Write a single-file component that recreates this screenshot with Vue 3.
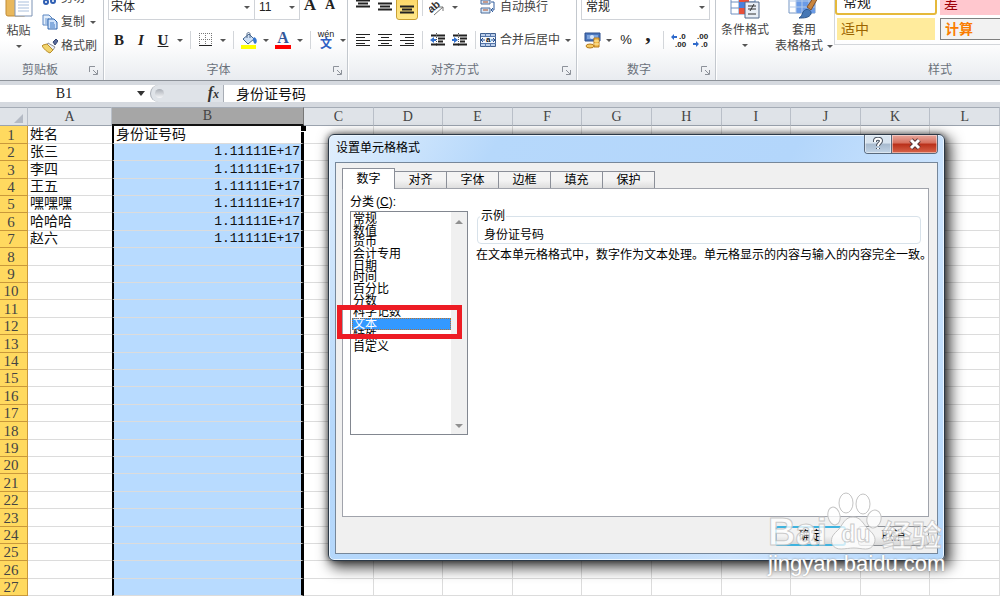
<script setup>
import { ref } from 'vue'

const columns = ['A', 'B', 'C', 'D', 'E', 'F', 'G', 'H', 'I', 'J', 'K', 'L']
const names = ['姓名', '张三', '李四', '王五', '嘿嘿嘿', '哈哈哈', '赵六']
const rows = Array.from({ length: 27 }, (_, i) => ({
  n: i + 1,
  a: names[i] || '',
  b: i === 0 ? '身份证号码' : i < 7 ? '1.11111E+17' : ''
}))
const tabs = ['数字', '对齐', '字体', '边框', '填充', '保护']
const categories = ['常规', '数值', '货币', '会计专用', '日期', '时间', '百分比', '分数', '科学记数', '文本', '特殊', '自定义']
const activeTab = ref('数字')
const category = ref('文本')
const formula = ref('身份证号码')
const cellName = ref('B1')
const vAligns = [
  { name: '顶端对齐', d: 'M1 2.5h14M3 5.5h10M1 8.5h14' },
  { name: '垂直居中', d: 'M1 5.5h14M3 8.5h10M1 11.5h14' },
  { name: '底端对齐', d: 'M1 8.5h14M3 11.5h10M1 14.5h14', on: true }
]
const hAligns = [
  { name: '文本左对齐', d: 'M1 2.5h14M1 5.5h9M1 8.5h14M1 11.5h9M1 13.5h14' },
  { name: '居中', d: 'M1 2.5h14M4 5.5h8M1 8.5h14M4 11.5h8M1 13.5h14' },
  { name: '文本右对齐', d: 'M1 2.5h14M6 5.5h9M1 8.5h14M6 11.5h9M1 13.5h14' }
]
</script>

<template>
  <main class="app">
    <header class="ribbon">
      <section class="group clip">
        <div class="tools side">
          <button class="big paste">
            <svg width="34" height="36" viewBox="0 0 34 36">
              <rect x="4" y="3" width="20" height="29" rx="2" fill="#e9b85c" stroke="#c18b35" />
              <path d="M13 8h11l6 6v18H13z" fill="#fff" stroke="#7c93b5" />
              <path d="M16 15h8M16 18h11M16 21h11M16 24h11M16 27h11" stroke="#a9bfdc" />
            </svg>
            <span>粘贴</span><i class="caret"></i>
          </button>
          <div class="stack">
            <button class="line">
              <svg width="16" height="16" viewBox="0 0 16 16"><path d="M6 0l5 10M11 0L5 10" stroke="#6f87a8" /><circle cx="4" cy="12" r="2" fill="none" stroke="#2f5fb3" stroke-width="2" /><circle cx="11" cy="11" r="2" fill="none" stroke="#2f5fb3" stroke-width="2" /></svg>
              <span>剪切</span>
            </button>
            <button class="line">
              <svg width="16" height="16" viewBox="0 0 16 16"><path d="M1 1h6l3 3v7H1z" fill="#e4effc" stroke="#5a86c2" /><path d="M3 5h4M3 7h4M3 9h3" stroke="#6c98d2" /><path d="M6 5h6l3 3v7H6z" fill="#cfe2fa" stroke="#2f65ad" /><path d="M8 9h4M8 11h5M8 13h5" stroke="#3f78c4" /></svg>
              <span>复制</span><i class="caret"></i>
            </button>
            <button class="line">
              <svg width="16" height="16" viewBox="0 0 16 16"><path d="M11 4l3-3 2 2-3 4z" fill="#586a9b" stroke="#344674" /><path d="M6 5l7 4-2 3-6-5z" fill="#edf0f5" stroke="#8e8f9a" /><path d="M1 7l4-1 6 6-3 3C5 14 2 11 0 8z" fill="#f1d36b" stroke="#b98e2d" /></svg>
              <span>格式刷</span>
            </button>
          </div>
        </div>
        <footer><span>剪贴板</span><button class="launch" aria-label="剪贴板选项"><svg width="9" height="9" viewBox="0 0 9 9"><path d="M.5 6V.5H6M8.500 4v4.500H4M4 4l4 4" fill="none" stroke="#8d929a" /></svg></button></footer>
      </section>

      <section class="group font">
        <div class="tools">
          <div class="row">
            <label class="combo wide"><select aria-label="字体"><option>宋体</option></select><i class="caret"></i></label>
            <label class="combo small"><select aria-label="字号"><option>11</option></select><i class="caret"></i></label>
            <button class="btn serif grow" aria-label="增大字号">A<svg width="6" height="5" viewBox="0 0 6 5"><path d="M0 4l3-4 3 4z" fill="#3567b8" /></svg></button>
            <button class="btn serif shrink" aria-label="减小字号">A<svg width="6" height="5" viewBox="0 0 6 5"><path d="M0 0l3 4 3-4z" fill="#3567b8" /></svg></button>
          </div>
          <div class="row">
            <button class="btn serif"><b>B</b></button>
            <button class="btn serif"><em>I</em></button>
            <button class="btn serif"><u>U</u></button>
            <button class="drop" aria-label="下划线选项"><i class="caret"></i></button>
            <i class="sep"></i>
            <button class="btn" aria-label="边框"><svg width="14" height="14" viewBox="0 0 14 14"><path d="M.5 0v13M6.500 0v13M12.500 0v13M0 .5h13M0 6.500h13" stroke="#777" stroke-dasharray="1 1" /><path d="M0 12.500h13" stroke="#222" /></svg></button>
            <button class="drop" aria-label="边框选项"><i class="caret"></i></button>
            <i class="sep"></i>
            <button class="btn" aria-label="填充颜色"><svg width="18" height="17" viewBox="0 0 18 17"><path d="M3 7l6-5 5 5-6 5z" fill="#cfe0f5" stroke="#3f638f" /><path d="M7 6V2c0-2 3-2 3 0v4" fill="none" stroke="#526b8a" /><path d="M14 5c4 2 3 6 1 7-1-1-2-2-2-5z" fill="#3575cf" /><path d="M1 13h15v4H1z" fill="#ff0" /></svg></button>
            <button class="drop" aria-label="填充选项"><i class="caret"></i></button>
            <button class="btn tone" aria-label="字体颜色"><span>A</span></button>
            <button class="drop" aria-label="字体颜色选项"><i class="caret"></i></button>
            <i class="sep"></i>
            <button class="btn pinyin" aria-label="拼音"><span>wén</span><b>文</b></button>
            <button class="drop" aria-label="拼音选项"><i class="caret"></i></button>
          </div>
        </div>
        <footer><span>字体</span><button class="launch" aria-label="字体选项"><svg width="9" height="9" viewBox="0 0 9 9"><path d="M.5 6V.5H6M8.500 4v4.500H4M4 4l4 4" fill="none" stroke="#8d929a" /></svg></button></footer>
      </section>

      <section class="group align">
        <div class="tools">
          <div class="row">
            <button v-for="a in vAligns" :key="a.name" class="btn" :class="{ on: a.on }" :aria-label="a.name"><svg width="16" height="18" viewBox="0 0 16 18"><path :d="a.d" stroke="#222" stroke-width="2" /></svg></button>
            <i class="sep"></i>
            <button class="btn" aria-label="方向"><svg width="18" height="17" viewBox="0 0 18 17"><text x="0" y="11" font-size="11" font-weight="bold" font-family="Liberation Sans" fill="#333" transform="rotate(-40 6 10)">ab</text><path d="M5 16l9-8M10 8h4v4" fill="none" stroke="#777" /></svg></button>
            <button class="drop" aria-label="方向选项"><i class="caret"></i></button>
            <i class="sep push"></i>
            <button class="line wrap">
              <svg width="16" height="16" viewBox="0 0 16 16"><path d="M1 1h9v4H1zM1 9h9v5H1z" fill="#d8e7f8" stroke="#4c6d99" /><path d="M3 3h5M3 11h5" stroke="#b04e22" /><path d="M11 3h3v8h-2M13 9l-2 2 2 2" fill="none" stroke="#315d9d" /></svg>
              <span>自动换行</span>
            </button>
          </div>
          <div class="row">
            <button v-for="a in hAligns" :key="a.name" class="btn" :aria-label="a.name"><svg width="16" height="16" viewBox="0 0 16 16"><path :d="a.d" stroke="#222" /></svg></button>
            <i class="sep"></i>
            <button class="btn" aria-label="减少缩进"><svg width="16" height="16" viewBox="0 0 16 16"><path d="M1 3.500h14M8 6.500h7M8 9.500h5M1 12.500h14" stroke="#222" stroke-width="2" /><path d="M6.500 1v14" stroke="#555" stroke-dasharray="1 1" /><path d="M0 8l4-3v2h2v2H4v2z" fill="#3271cf" /></svg></button>
            <button class="btn" aria-label="增加缩进"><svg width="16" height="16" viewBox="0 0 16 16"><path d="M1 3.500h14M8 6.500h7M8 9.500h5M1 12.500h14" stroke="#222" stroke-width="2" /><path d="M6.500 1v14" stroke="#555" stroke-dasharray="1 1" /><path d="M6 8L2 5v2H0v2h2v2z" fill="#3271cf" /></svg></button>
            <i class="sep"></i>
            <button class="line wrap">
              <svg width="16" height="16" viewBox="0 0 16 16"><path d="M.5 1.500h15v13H.5z" fill="#b9cdea" stroke="#3f5f8e" /><path d="M1 5h14v6H1z" fill="#f2f7fd" /><path d="M1 4.500h15M1 11.500h15M5.500 1v3M10.500 1v3M5.500 12v3M10.500 12v3" stroke="#5576aa" /><path d="M1 8h4M3 6l-2 2 2 2M15 8h-4M13 6l2 2-2 2" fill="none" stroke="#274f91" /><text x="6" y="10" font-size="8" font-weight="bold" font-family="Liberation Sans" fill="#111">a</text></svg>
              <span>合并后居中</span><i class="caret"></i>
            </button>
          </div>
        </div>
        <footer><span>对齐方式</span><button class="launch" aria-label="对齐选项"><svg width="9" height="9" viewBox="0 0 9 9"><path d="M.5 6V.5H6M8.500 4v4.500H4M4 4l4 4" fill="none" stroke="#8d929a" /></svg></button></footer>
      </section>

      <section class="group number">
        <div class="tools">
          <div class="row">
            <label class="combo full"><select aria-label="数字格式"><option>常规</option></select><i class="caret"></i></label>
          </div>
          <div class="row">
            <button class="btn" aria-label="会计数字格式"><svg width="17" height="17" viewBox="0 0 17 17"><path d="M1 1h15v8H1z" fill="#4d78bd" stroke="#2c4f8d" /><path d="M3 3h11v4H3z" fill="#7fa5dd" /><circle cx="8" cy="5" r="2" fill="#d8e8fc" /><path d="M10 6h5v9h-5z" fill="#f2bd4e" stroke="#b77a1c" /><path d="M10 9h5M10 12h5" stroke="#fff0b0" /><ellipse cx="6" cy="14" rx="4" ry="2" fill="#f5ca62" stroke="#b77a1c" /></svg></button>
            <button class="drop" aria-label="会计选项"><i class="caret"></i></button>
            <button class="btn pct">%</button>
            <button class="btn comma">,</button>
            <i class="sep"></i>
            <button class="btn" aria-label="增加小数位数"><svg width="16" height="14" viewBox="0 0 16 14"><path d="M0 4l3-3v2h3v2H3v2z" fill="#2f6acb" /><g font-family="Liberation Sans" font-weight="bold" font-size="8" fill="#222"><text x="8" y="6">.0</text><text x="4" y="14">.00</text></g></svg></button>
            <button class="btn" aria-label="减少小数位数"><svg width="16" height="14" viewBox="0 0 16 14"><path d="M6 11L3 8v2H0v2h3v2z" fill="#2f6acb" /><g font-family="Liberation Sans" font-weight="bold" font-size="8" fill="#222"><text x="4" y="6">.00</text><text x="8" y="14">.0</text></g></svg></button>
          </div>
        </div>
        <footer><span>数字</span><button class="launch" aria-label="数字选项"><svg width="9" height="9" viewBox="0 0 9 9"><path d="M.5 6V.5H6M8.500 4v4.500H4M4 4l4 4" fill="none" stroke="#8d929a" /></svg></button></footer>
      </section>

      <section class="group styles">
        <div class="tools side">
          <button class="big cond">
            <svg width="30" height="32" viewBox="0 0 30 32"><path d="M1 1h24v26H1z" fill="#fff" stroke="#6e8fc0" /><path d="M1 9h24M1 15h24M1 21h24M9 1v26M17 1v26" stroke="#6e8fc0" /><path d="M9 9h10v6H9z" fill="#e8503a" /><path d="M9 15h6v6H9z" fill="#4a80dc" /><path d="M9 21h12v6H9z" fill="#e8503a" /><path d="M15 15h14v16H15z" fill="#e9eff7" stroke="#51698a" /><path d="M18 19h8M18 22h8M24 17l-4 7M18 27h8" stroke="#333" /></svg>
            <span>条件格式</span><i class="caret"></i>
          </button>
          <button class="big table">
            <svg width="32" height="32" viewBox="0 0 32 32"><path d="M1 1h26v25H1z" fill="#fff" stroke="#7797c4" /><path d="M8 8h19v18H8z" fill="#6b9be6" /><path d="M1 8h26M1 14h26M1 20h26M8 1v25M14 1v25M21 1v25" stroke="#b4cae9" /><path d="M19 20L28 7l3 2-8 14z" fill="#c9853e" stroke="#80512a" /><path d="M11 31c2-1 3-3 4-6 3-5 9-2 8 2-2 4-7 4-12 4z" fill="#4677b5" stroke="#2e578b" /></svg>
            <span>套用</span><span>表格格式<i class="caret"></i></span>
          </button>
          <div class="gallery">
            <button class="sw normal">常规</button><button class="sw bad">差</button>
            <button class="sw neutral">适中</button><button class="sw calc">计算</button>
          </div>
        </div>
        <footer><span>样式</span></footer>
      </section>
    </header>

    <div class="formula">
      <label class="namebox"><input v-model="cellName" aria-label="名称框" /><i class="caret dark"></i></label>
      <div class="fx"><i class="knob"></i><button aria-label="插入函数"><em>f</em><em class="x">x</em></button></div>
      <input v-model="formula" class="entry" aria-label="编辑栏" />
    </div>

    <table class="sheet">
      <colgroup><col class="c-row" /><col class="c-a" /><col class="c-b" /><col v-for="c in 10" :key="c" /></colgroup>
      <thead>
        <tr><th class="corner"><svg width="9" height="9" viewBox="0 0 9 9"><path d="M9 0v9H0z" fill="#b4bac4" /></svg></th><th v-for="c in columns" :key="c" :class="{ sel: c === 'B' }">{{ c }}</th></tr>
      </thead>
      <tbody>
        <tr v-for="r in rows" :key="r.n">
          <th>{{ r.n }}</th>
          <td>{{ r.a }}</td>
          <td class="b" :class="{ num: r.n > 1 }">{{ r.b }}<i v-if="r.n === 1" class="handle"></i></td>
          <td v-for="c in 10" :key="c"></td>
        </tr>
      </tbody>
    </table>

    <section class="dialog" role="dialog" aria-labelledby="dialog-title">
      <div class="titlebar">
        <h1 id="dialog-title">设置单元格格式</h1>
        <div class="winbtns">
          <button class="help" aria-label="帮助"><svg width="12" height="14" viewBox="0 0 12 14"><path d="M3 5V4c0-3 6-3 6 0 0 2-3 2-3 5M6 11v1" fill="none" stroke="#4b535f" stroke-width="4" /><path d="M3 5V4c0-3 6-3 6 0 0 2-3 2-3 5M6 11v1" fill="none" stroke="#fff" stroke-width="2" /></svg></button>
          <button class="close" aria-label="关闭"><svg width="14" height="12" viewBox="0 0 14 12"><path d="M3 2l8 8M11 2l-8 8" stroke="#5b3437" stroke-width="5" /><path d="M3 2l8 8M11 2l-8 8" stroke="#fff" stroke-width="3" /></svg></button>
        </div>
      </div>
      <div class="body">
        <nav class="tabs" role="tablist">
          <button v-for="t in tabs" :key="t" role="tab" :class="{ active: t === activeTab }" @click="activeTab = t">{{ t }}</button>
        </nav>
        <div class="panel">
          <div class="left">
            <div id="category-title" class="caption">分类<span class="key">(<u>C</u>):</span></div>
            <div class="listbox">
              <div class="choices" role="radiogroup" aria-labelledby="category-title">
                <label v-for="c in categories" :key="c" :class="{ chosen: c === category }"><input v-model="category" type="radio" name="category" :value="c" />{{ c }}</label>
              </div>
              <div class="bar"><i class="up"></i><i class="caret"></i></div>
            </div>
          </div>
          <div class="right">
            <fieldset><legend>示例</legend><span>身份证号码</span></fieldset>
            <p>在文本单元格格式中，数字作为文本处理。单元格显示的内容与输入的内容完全一致。</p>
          </div>
        </div>
        <div class="actions"><button class="ok">确定</button><button>取消</button></div>
      </div>
      <i class="mark"></i>
      <div class="logo">
        <div class="brand">
          <span class="bai">Bai</span>
          <span class="paw"><svg width="56" height="60" viewBox="0 0 56 60"><g fill="#fff" fill-opacity=".75" stroke="#c4c4c4"><ellipse cx="8" cy="25" rx="6" ry="9" transform="rotate(-12 8 25)" /><ellipse cx="20" cy="12" rx="7" ry="10" /><ellipse cx="37" cy="13" rx="7" ry="10" /><ellipse cx="48" cy="28" rx="7" ry="9" transform="rotate(15 48 28)" /><path d="M27 26c8 0 10 7 15 12 5 4 9 9 6 15-4 8-12 4-20 4-9 0-18 4-22-4-2-7 2-10 7-15 4-5 6-12 14-12z" /></g></svg><b>du</b></span>
          <span class="cn">经验</span>
        </div>
        <span class="url">jingyan.baidu.com</span>
      </div>
    </section>
  </main>
</template>

<style>
html, body { overflow: hidden; }
body { margin: 0; background: #fff; }
</style>

<style scoped>
* { box-sizing: border-box; }
.app { position: relative; height: 100vh; overflow: hidden; font: 12px/16px "Liberation Sans", "Noto Sans CJK SC", sans-serif; color: #222; }
button { border: 0; padding: 0; background: none; font: inherit; color: inherit; white-space: nowrap; }
input, select { font: inherit; color: inherit; border: 0; padding: 0; outline: 0; background: none; border-radius: 0; appearance: none; }
svg { display: block; flex: none; }
.caret { flex: none; border: 3px solid transparent; border-top: 3px solid #555; border-bottom: 0; display: block; }
.caret.dark { border-width: 5px 4px 0; border-top-color: #333; }

.ribbon { display: flex; height: 81px; overflow: hidden; background: linear-gradient(#fff 50%, #e9ecf0); border-bottom: 1px solid #8d9299; }
.group { display: flex; flex: none; flex-direction: column; justify-content: flex-end; height: 80px; border-right: 1px solid #c3c8ce; box-shadow: 1px 0 #fff; }
.clip { width: 104px; }
.font { width: 244px; }
.align { width: 229px; }
.number { width: 139px; }
.styles { flex: 1; min-width: 0; border-right: 0; }
.tools { display: flex; flex: none; flex-direction: column; gap: 7px; padding: 0 4px 7px; }
.tools.side { flex-direction: row; align-items: flex-end; gap: 0; padding: 0; }
.row { display: flex; flex: none; align-items: center; height: 26px; }
footer { display: flex; flex: none; align-items: center; height: 20px; padding: 0 4px 0 0; color: #6a717b; }
footer span { flex: 1; text-align: center; }
.clip footer span { padding-right: 9px; }
.styles footer span { flex: none; margin-left: auto; padding-right: 44px; }
.launch { width: 10px; }
.btn { display: flex; flex: none; align-items: center; justify-content: center; width: 22px; height: 22px; }
.drop { display: flex; flex: none; justify-content: center; width: 12px; }
.sep { flex: none; width: 1px; height: 18px; margin: 0 4px; background: #d3d6da; }
.sep.push { margin-right: 14px; background: none; }
.serif { font: 15px/18px "Liberation Serif", serif; }
.serif em { font-weight: bold; }
.serif u { font-weight: bold; }
.grow, .shrink { width: 20px; align-items: flex-start; font-weight: bold; font-size: 17px; }
.shrink { font-size: 14px; }
.on { height: 26px; border: 1px solid #c9a034; border-radius: 3px; background: linear-gradient(#fbd462, #ffe88a); }
.tone span { width: 16px; height: 18px; border-bottom: 4px solid #f00; font: bold 16px/14px "Liberation Serif", serif; color: #33579b; }
.pinyin { flex-direction: column; font-size: 9px; line-height: 7px; }
.pinyin b { color: #2f5fc4; font-size: 12px; line-height: 12px; }
.pct { font-size: 13px; }
.comma { font: bold 22px/10px "Liberation Serif", serif; align-items: flex-start; }
.combo { display: flex; align-items: center; height: 25px; padding: 0 4px; border: 1px solid #d0d3d8; background: #fff; }
.combo select { flex: 1; min-width: 0; }
.wide { width: 147px; padding-left: 2px; }
.small { width: 46px; margin-left: -1px; margin-right: 3px; }
.full { width: 129px; }
.line { display: flex; align-items: center; gap: 3px; height: 24px; color: #444; }
.line .caret { margin-left: 2px; }
.wrap { gap: 4px; }
.wrap .caret { margin-left: 1px; }
.stack { display: flex; flex-direction: column; margin-left: 5px; padding-bottom: 2px; }
.big { display: flex; flex: none; flex-direction: column; align-items: center; width: 37px; color: #444; line-height: 16px; }
.paste { padding-bottom: 12px; }
.paste span { margin: 3px 0 6px; }
.cond { width: 58px; padding-bottom: 13px; }
.cond span { margin: 3px 0 6px; }
.table { width: 60px; padding-bottom: 6px; }
.table svg { margin-bottom: 3px; }
.table span { display: flex; align-items: center; gap: 4px; }
.gallery { display: grid; flex: 1; min-width: 0; grid-template-columns: 102px 1fr; gap: 3px; margin-bottom: 15px; padding: 0 0 4px; border: solid #d4d7db; border-width: 0 0 1px 1px; overflow: hidden; }
.sw { height: 22px; padding-left: 6px; text-align: left; font-size: 14px; line-height: 18px; }
.normal { height: 26px; margin-top: -4px; border: 2px solid #e5b93b; border-radius: 3px; background: #fff; }
.bad { background: #ffc7ce; color: #9c0006; padding-left: 4px; }
.neutral { margin: 0 2px; background: #ffeb9c; color: #9c6500; padding-left: 4px; }
.calc { border: 1px solid #7f7f7f; border-right: 0; background: #f2f2f2; color: #fa7d00; font-weight: bold; padding-left: 4px; }

.formula { display: flex; height: 26px; border: solid #d5d9df; border-width: 4px 0 5px; background: #fff; }
.namebox { display: flex; align-items: center; width: 150px; padding-right: 5px; }
.namebox input { flex: 1; width: 100%; padding-right: 9px; text-align: center; font: 14px/16px "Liberation Serif", serif; }
.fx { display: flex; align-items: center; justify-content: space-between; width: 74px; padding: 0 4px; border: 1px solid #a8adb5; border-width: 0 1px; border-radius: 9px 0 0 9px; background: #dfe3e8; }
.knob { width: 9px; height: 9px; border-radius: 5px; background: linear-gradient(#aaafb7, #f5f6f8); }
.fx em { font: italic bold 16px/16px "Liberation Serif", serif; color: #333; }
.fx .x { font-size: 12px; }
.entry { flex: 1; min-width: 0; padding-left: 12px; font-size: 14px; color: #111; }

.sheet { width: 100%; table-layout: fixed; border-collapse: separate; border-spacing: 0; font: 14px/16px "Liberation Serif", "Noto Sans CJK SC", serif; color: #111; }
.c-row { width: 28px; }
.c-a { width: 84px; }
.c-b { width: 192px; }
.sheet th, .sheet td { height: 17px; padding: 0; font-weight: normal; overflow: visible; white-space: nowrap; }
.sheet tbody tr:nth-child(5n + 1) > *, .sheet tbody tr:nth-child(5n + 3) > * { height: 18px; }
.sheet thead th { height: 18px; border: solid #9ba3ae; border-width: 1px 1px 1px 0; border-color: #a5acb6 #b9bfc8 #9ba3ae; background: #dfe3e8; font-size: 14px; color: #444; }
.sheet thead .sel { background: #a6a6a6; border-right-color: #777; border-bottom: 2px solid #111; }
.corner svg { margin: 3px 4px 0 auto; }
.sheet tbody th { border: solid #c9983a; border-width: 0 1px 1px 0; background: #ffd95f; font-size: 15px; color: #444; padding-right: 5px; line-height: 16px; }
.sheet td { border: solid #dcdcdc; border-width: 0 1px 1px 0; line-height: 14px; padding-left: 2px; }
.sheet td:nth-child(2) { border-right: 0; }
.sheet .b { position: relative; border-left: 2px solid #000; border-right: 3px solid #000; padding-left: 2px; }
.sheet .b.num { background: #b8dbff; text-align: right; font-family: "Liberation Mono", monospace; font-size: 13px; line-height: 16px; padding-right: 1px; }
.handle { position: absolute; top: 0; right: -5px; width: 6px; height: 6px; border: solid #fff; border-width: 0 0 1px 1px; background: #000; }

.dialog { position: absolute; top: 134px; left: 328px; right: 55px; padding: 0 6px 6px; border: 1px solid #2c3947; border-radius: 6px; background: linear-gradient(120deg, #e1effd, #b6d8fb 20%, #b3d6fb 55%, #cde4fd 75%, #b4d7fb); box-shadow: inset 0 0 0 1px #ecf6ff, 0 0 6px rgba(0, 0, 0, .55), 4px 5px 14px 2px rgba(0, 0, 0, .7); color: #000; }
.titlebar { display: flex; justify-content: space-between; height: 27px; }
h1 { margin: 5px 0 0 1px; font: 12px/16px "Liberation Sans", "Noto Sans CJK SC", sans-serif; }
.winbtns { display: flex; height: 19px; border: 1px solid #59697c; border-top: 0; border-radius: 0 0 4px 4px; overflow: hidden; }
.winbtns button { display: flex; align-items: center; justify-content: center; box-shadow: inset 0 0 0 1px rgba(255, 255, 255, .45); }
.winbtns .help { width: 27px; border-right: 1px solid #59697c; background: linear-gradient(#d8e4ef 45%, #a7bace 50%, #c2d4e6); }
.winbtns .close { width: 45px; background: linear-gradient(#e49c90 10%, #d66e5c 45%, #b92f19 50%, #d8644a); }
.body { padding: 6px 8px 7px 6px; border: 1px solid #76879a; background: #f0f0f0; }
.tabs { display: flex; align-items: flex-end; height: 19px; }
.tabs button { width: 52px; height: 17px; border: solid #8b8f98; border-width: 1px 1px 0 0; background: linear-gradient(#f4f4f4 50%, #dedede); line-height: 17px; }
.tabs .active { position: relative; width: 53px; height: 21px; margin-bottom: -1px; border-left-width: 1px; background: #fff; line-height: 20px; }
.panel { display: flex; gap: 8px; padding: 5px 6px 81px 7px; border: 1px solid #a0a3ab; background: #fff; }
.left { flex: none; width: 118px; }
.caption { height: 17px; line-height: 17px; }
.key { margin-left: 2px; }
.listbox { display: flex; height: 224px; border: 1px solid #828790; }
.choices { flex: 1; min-width: 0; padding: 1px 0 0 1px; }
.choices label { display: block; height: 12px; padding: 0 1px; line-height: 12px; white-space: nowrap; }
.choices label:nth-child(3n) { height: 11px; line-height: 11px; }
.choices input { position: absolute; opacity: 0; pointer-events: none; }
.choices .chosen { background: #39f; color: #fff; outline: 1px dotted #b8722f; outline-offset: -1px; }
.bar { display: flex; flex-direction: column; align-items: center; justify-content: space-between; width: 16px; padding: 8px 0 6px; background: #f0f0f0; }
.up { border: 4px solid transparent; border-top: 0; border-bottom-color: #909090; }
.bar .caret { border-width: 4px 4px 0; border-top-color: #909090; }
.right { flex: 1; min-width: 0; padding-top: 14px; }
fieldset { min-width: 0; height: 36px; margin: 0 1px 3px; padding: 3px 6px 0; border: 1px solid #d8e2ea; border-radius: 4px; }
legend { margin-left: -4px; padding: 0 1px; line-height: 16px; }
p { margin: 0; white-space: nowrap; }
.actions { display: flex; justify-content: flex-end; gap: 12px; margin-top: 9px; }
.actions button { width: 71px; height: 20px; border: 1px solid #8c8f94; border-radius: 3px; background: linear-gradient(#f3f3f3 50%, #d8d8d8); line-height: 18px; }
.actions .ok { border: 2px solid #3fb3df; line-height: 16px; }

/* Highlight box over the selected category */
.mark { position: absolute; left: 8px; top: 170px; width: 125px; height: 34px; border: 5px solid #ed1c24; }

/* Translucent site badge */
.logo { position: absolute; right: -2px; bottom: -17px; width: 178px; pointer-events: none; color: rgba(255, 255, 255, .8); white-space: nowrap; }
.brand { display: flex; align-items: flex-end; height: 60px; }
.brand span, .brand b { -webkit-text-stroke: 1px rgba(190, 190, 190, .8); }
.bai { width: 58px; font: bold 38px/38px "Liberation Sans", sans-serif; }
.paw { position: relative; width: 56px; height: 60px; }
.paw b { position: absolute; left: 15px; bottom: 4px; font: bold 24px/26px "Liberation Sans", sans-serif; }
.cn { font: bold 30px/36px "Noto Sans CJK SC", sans-serif; }
.url { display: block; font: 22px/26px "Liberation Sans", sans-serif; color: #fff; text-shadow: 0 0 2px #888; }
</style>
